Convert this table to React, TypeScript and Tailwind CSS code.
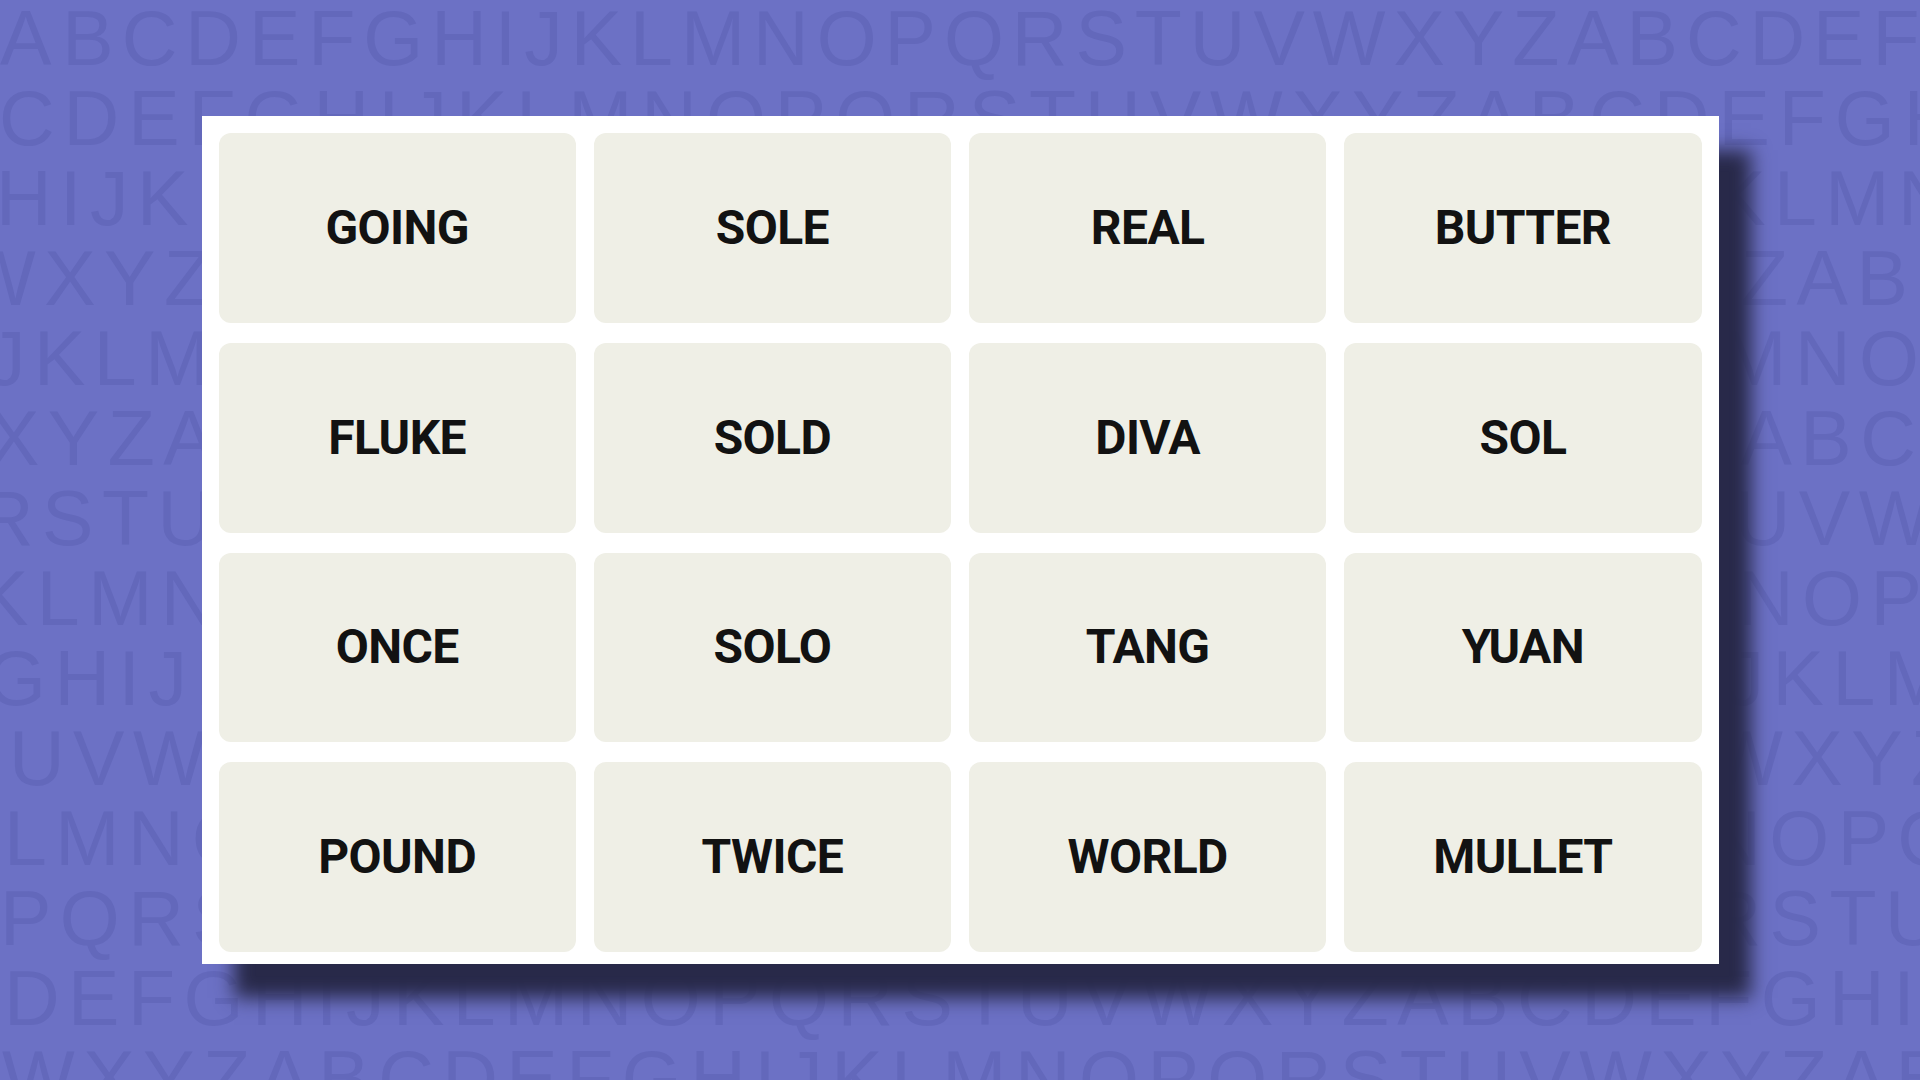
import React from "react";

const ALPHA = "ABCDEFGHIJKLMNOPQRSTUVWXYZ";

function seq(start: string, n: number): string {
  const i = ALPHA.indexOf(start);
  return Array.from({ length: n }, (_, k) => ALPHA[(i + k) % 26]).join("");
}

const rows: { start: string; cls: string }[] = [
  { start: "B", cls: "ml-[0px] tracking-[8px]" },
  { start: "C", cls: "ml-[-1px] tracking-[9px]" },
  { start: "H", cls: "ml-[-4px] tracking-[8.5px]" },
  { start: "W", cls: "ml-[-37px] tracking-[8.5px]" },
  { start: "J", cls: "ml-[-13px] tracking-[8.5px]" },
  { start: "X", cls: "ml-[-12px] tracking-[8.5px]" },
  { start: "R", cls: "ml-[-22px] tracking-[8.5px]" },
  { start: "K", cls: "ml-[-23px] tracking-[8.5px]" },
  { start: "G", cls: "ml-[-14px] tracking-[8.5px]" },
  { start: "U", cls: "ml-[9px] tracking-[8.5px]" },
  { start: "L", cls: "ml-[4px] tracking-[8.5px]" },
  { start: "P", cls: "ml-[0px] tracking-[8.5px]" },
  { start: "D", cls: "ml-[4px] tracking-[8.5px]" },
  { start: "W", cls: "ml-[2px] tracking-[8.5px]" },
];

const words = [
  "GOING", "SOLE", "REAL", "BUTTER",
  "FLUKE", "SOLD", "DIVA", "SOL",
  "ONCE", "SOLO", "TANG", "YUAN",
  "POUND", "TWICE", "WORLD", "MULLET",
];

export default function App() {
  return (
    <div className="relative w-[1920px] h-[1080px] overflow-hidden bg-[#6c71c5] flex items-center justify-center">
      <div
        aria-hidden="true"
        className="absolute left-0 right-0 top-[-2px] flex flex-col font-['Liberation_Sans',Arial,sans-serif] text-[77px] leading-[80px] text-[#6368bb] whitespace-nowrap select-none"
      >
        {rows.map((r, idx) => (
          <div key={idx} className={r.cls}>
            {idx === 0 ? (
              <>
                <span className="mr-[3px]">A</span>
                {seq("B", 34)}
              </>
            ) : (
              seq(r.start, 34)
            )}
          </div>
        ))}
      </div>

      <div className="relative w-[1517px] h-[848px] bg-white px-[17px] pt-[17px] pb-[12px] grid grid-cols-4 grid-rows-4 gap-x-[18px] gap-y-[20px] shadow-[32px_34px_18px_#282949]">
        {words.map((w) => (
          <div
            key={w}
            className="rounded-[12px] bg-[#efefe6] flex items-center justify-center"
          >
            <span className="font-['Roboto',sans-serif] font-bold text-[48px] tracking-[-0.6px] text-[#121212]">
              {w}
            </span>
          </div>
        ))}
      </div>
    </div>
  );
}
